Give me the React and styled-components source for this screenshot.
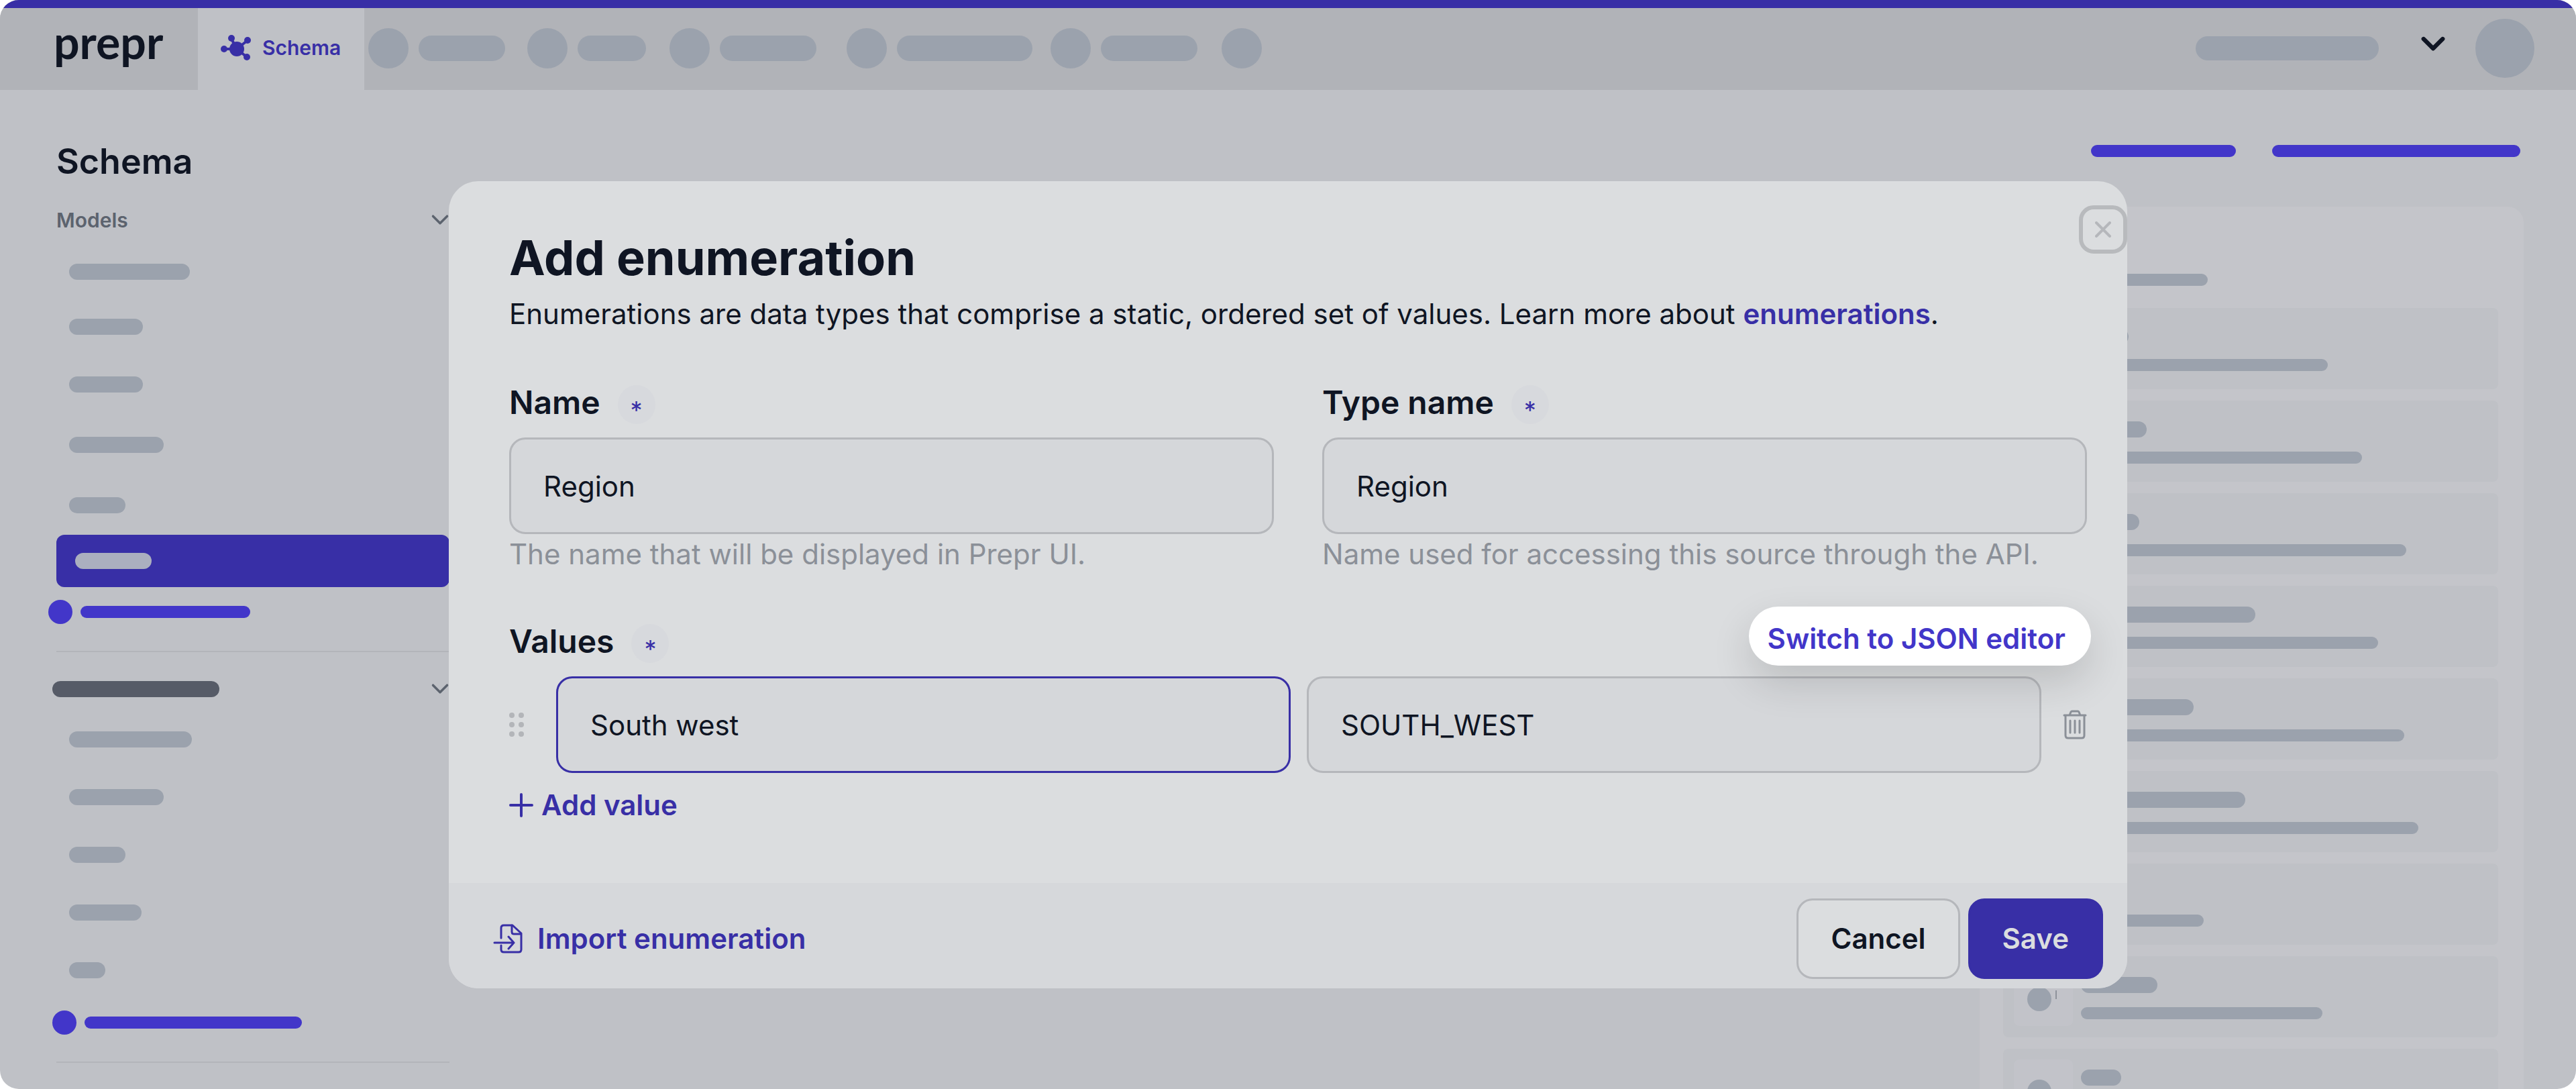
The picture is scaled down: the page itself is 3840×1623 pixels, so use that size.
import React from 'react';
import styled, { createGlobalStyle } from 'styled-components';

const colors = {
  page: '#bfc1c6',
  header: '#b1b3b8',
  panel: '#c4c5ca',
  skeleton: '#9ba2ad',
  brand: '#382fa6',
  accent: '#4236c9',
  modal: '#dbdddf',
  field: '#d5d7da',
  border: '#b5b7bb',
  text: '#0f1523',
  muted: '#8b9098',
  label: '#5c636e',
};

const NAV_ITEMS = [
  { width: 129, gap: 33 },
  { width: 102, gap: 35 },
  { width: 144, gap: 45 },
  { width: 202, gap: 27 },
  { width: 144, gap: 36 },
];

const MODELS = [
  { width: 180, gap: 45 },
  { width: 110, gap: 58 },
  { width: 110, gap: 62 },
  { width: 141, gap: 66 },
  { width: 84, gap: 66 },
];

const COMPONENTS = [
  { width: 183, gap: 51 },
  { width: 141, gap: 62 },
  { width: 84, gap: 62 },
  { width: 108, gap: 62 },
  { width: 54, gap: 62 },
];

const FIELDS = [
  { title: 71, body: 368 },
  { title: 98, body: 419 },
  { title: 87, body: 485 },
  { title: 260, body: 443 },
  { title: 168, body: 482 },
  { title: 245, body: 503 },
  { title: 60, body: 183 },
  { title: 114, body: 360, marked: true },
  { title: 60, body: 240 },
];

const SchemaIcon = () => (
  <svg width="46" height="38" viewBox="0 0 46 38" aria-hidden="true">
    <g stroke="currentColor" strokeWidth="4">
      <path d="M24 21 16 6M24 21 39 9M24 21H6M24 21 39 33" />
    </g>
    <g fill="currentColor">
      <circle cx="24" cy="21" r="11" />
      <circle cx="16" cy="5" r="5" />
      <circle cx="40" cy="8" r="5" />
      <circle cx="5" cy="21" r="5" />
      <circle cx="39" cy="33" r="5" />
    </g>
  </svg>
);

const ChevronIcon = ({ size = 24, stroke = 3 }) => (
  <svg width={size} height={size} viewBox="0 0 24 24" aria-hidden="true">
    <path
      d="M3 7l9 9 9-9"
      fill="none"
      stroke="currentColor"
      strokeWidth={stroke}
      strokeLinecap="round"
      strokeLinejoin="round"
    />
  </svg>
);

const CloseIcon = () => (
  <svg width="24" height="24" viewBox="0 0 24 24" aria-hidden="true">
    <path
      d="M2 2l20 20M22 2 2 22"
      stroke="currentColor"
      strokeWidth="4"
      strokeLinecap="round"
    />
  </svg>
);

const PlusIcon = () => (
  <svg width="36" height="36" viewBox="0 0 36 36" aria-hidden="true">
    <path
      d="M18 2v32M2 18h32"
      stroke="currentColor"
      strokeWidth="4"
      strokeLinecap="round"
    />
  </svg>
);

const GripIcon = () => (
  <svg width="22" height="36" viewBox="0 0 22 36" aria-hidden="true">
    <g fill="currentColor">
      <circle cx="4" cy="4" r="4" />
      <circle cx="18" cy="4" r="4" />
      <circle cx="4" cy="18" r="4" />
      <circle cx="18" cy="18" r="4" />
      <circle cx="4" cy="32" r="4" />
      <circle cx="18" cy="32" r="4" />
    </g>
  </svg>
);

const TrashIcon = () => (
  <svg width="36" height="44" viewBox="0 0 36 44" aria-hidden="true">
    <g
      fill="none"
      stroke="currentColor"
      strokeWidth="3"
      strokeLinecap="round"
      strokeLinejoin="round"
    >
      <path d="M2 8h32M10 8l2-5q1-1 2-1h8q1 0 2 1l2 5M4 8v30q0 4 4 4h20q4 0 4-4V8" />
      <path d="M11 16v18M18 16v18M25 16v18" />
    </g>
  </svg>
);

const ImportIcon = () => (
  <svg width="44" height="44" viewBox="0 0 44 44" aria-hidden="true">
    <g
      fill="none"
      stroke="currentColor"
      strokeWidth="3"
      strokeLinecap="round"
      strokeLinejoin="round"
    >
      <path d="M12 21V6q0-4 4-4h13L42 14v24q0 4-4 4H16q-4 0-4-4v-6" />
      <path d="M28 2v10q0 3 3 3h10M2 28h29M23 19l8 9-8 9" />
    </g>
  </svg>
);

const FieldIcon = ({ marked }) => (
  <svg width="44" height="36" viewBox="0 0 44 36" aria-hidden="true">
    <circle cx="18" cy="18" r="18" fill={colors.skeleton} />
    {marked && <path d="M43 5v13" stroke={colors.label} />}
  </svg>
);

const Header = () => (
  <TopBar>
    <Brand href="#">prepr</Brand>
    <Tab href="#schema">
      <SchemaIcon />
      Schema
    </Tab>
    <Nav>
      {NAV_ITEMS.map((item, i) => (
        <NavItem key={i} $gap={item.gap}>
          <Dot $size={60} />
          <Bar $width={item.width} $height={38} />
        </NavItem>
      ))}
      <Dot $size={60} />
    </Nav>
    <Account>
      <Bar $width={273} $height={36} />
      <AccountToggle type="button" aria-label="Account menu">
        <ChevronIcon size={38} stroke={4} />
      </AccountToggle>
      <Dot $size={88} />
    </Account>
  </TopBar>
);

const SideNav = () => (
  <Sidebar>
    <SidebarTitle>Schema</SidebarTitle>
    <SidebarHeading>
      Models
      <ChevronIcon size={28} />
    </SidebarHeading>
    {MODELS.map((item, i) => (
      <SidebarItem key={i} $gap={item.gap}>
        <Bar $width={item.width} $height={24} />
      </SidebarItem>
    ))}
    <ActiveItem>
      <Bar $width={114} $height={24} $color="#abafbf" />
    </ActiveItem>
    <SidebarAction $gap={19} $outset={12}>
      <Dot $size={36} $color={colors.accent} />
      <Bar $width={253} $height={18} $color={colors.accent} />
    </SidebarAction>
    <Divider />
    <SidebarHeading $outset={6}>
      <Bar $width={249} $height={24} $color="#565b67" />
      <ChevronIcon size={28} />
    </SidebarHeading>
    {COMPONENTS.map((item, i) => (
      <SidebarItem key={i} $gap={i === 0 ? 43 : item.gap}>
        <Bar $width={item.width} $height={24} />
      </SidebarItem>
    ))}
    <SidebarAction $gap={48} $outset={6}>
      <Dot $size={36} $color={colors.accent} />
      <Bar $width={324} $height={18} $color={colors.accent} />
    </SidebarAction>
    <Divider />
  </Sidebar>
);

const FieldPanel = () => (
  <Main>
    <PageActions>
      <Bar $width={216} $height={18} $color={colors.accent} />
      <Bar $width={370} $height={18} $color={colors.accent} />
    </PageActions>
    <Panel>
      <Bar $width={305} $height={18} />
      <PanelList>
        {FIELDS.map((field, i) => (
          <PanelRow key={i}>
            <Thumb>
              <FieldIcon marked={field.marked} />
            </Thumb>
            <PanelRowText>
              <Bar $width={field.title} $height={24} />
              <Bar $width={field.body} $height={18} />
            </PanelRowText>
          </PanelRow>
        ))}
      </PanelList>
    </Panel>
  </Main>
);

const EnumerationModal = () => (
  <Overlay>
    <Modal role="dialog" aria-modal="true" aria-labelledby="modal-title">
      <CloseButton type="button" aria-label="Close">
        <CloseIcon />
      </CloseButton>
      <ModalBody>
        <ModalTitle id="modal-title">Add enumeration</ModalTitle>
        <Description>
          Enumerations are data types that comprise a static, ordered set of
          values. Learn more about <a href="#enumerations">enumerations</a>.
        </Description>

        <FieldGrid>
          <div>
            <LabelRow>
              <Label htmlFor="name">Name</Label>
              <Required>*</Required>
            </LabelRow>
            <Input id="name" type="text" defaultValue="Region" />
            <Help>The name that will be displayed in Prepr UI.</Help>
          </div>
          <div>
            <LabelRow>
              <Label htmlFor="type-name">Type name</Label>
              <Required>*</Required>
            </LabelRow>
            <Input id="type-name" type="text" defaultValue="Region" />
            <Help>Name used for accessing this source through the API.</Help>
          </div>
        </FieldGrid>

        <ValuesHeader>
          <LabelRow>
            <Label htmlFor="value-label">Values</Label>
            <Required>*</Required>
          </LabelRow>
          <SwitchButton type="button">Switch to JSON editor</SwitchButton>
        </ValuesHeader>
        <ValueRow>
          <IconButton type="button" aria-label="Reorder" $color="#b3b5b9">
            <GripIcon />
          </IconButton>
          <ValueInputs>
            <Input
              id="value-label"
              type="text"
              defaultValue="South west"
              $active
            />
            <Input
              type="text"
              aria-label="Value API ID"
              defaultValue="SOUTH_WEST"
            />
          </ValueInputs>
          <IconButton type="button" aria-label="Delete value">
            <TrashIcon />
          </IconButton>
        </ValueRow>
        <AddButton type="button">
          <PlusIcon />
          Add value
        </AddButton>
      </ModalBody>

      <ModalFooter>
        <ImportButton type="button">
          <ImportIcon />
          Import enumeration
        </ImportButton>
        <FooterActions>
          <Button type="button">Cancel</Button>
          <Button type="button" $primary>
            Save
          </Button>
        </FooterActions>
      </ModalFooter>
    </Modal>
  </Overlay>
);

const App = () => (
  <>
    <GlobalStyle />
    <Page>
      <Header />
      <Workspace>
        <SideNav />
        <FieldPanel />
      </Workspace>
      <EnumerationModal />
    </Page>
  </>
);

const GlobalStyle = createGlobalStyle`
  *, *::before, *::after {
    box-sizing: border-box;
  }

  body {
    margin: 0;
    background: #fff;
    color: ${colors.text};
    font-family: Inter, sans-serif;
    font-size: 42px;
    line-height: 56px;
  }

  button, input {
    font: inherit;
    color: inherit;
  }

  button {
    padding: 0;
    border: 0;
    background: none;
    cursor: pointer;
  }

  h1, h2, p {
    margin: 0;
  }

  a {
    color: inherit;
    text-decoration: none;
  }

  svg {
    display: block;
    flex: none;
  }
`;

const Page = styled.div`
  position: relative;
  display: flex;
  flex-direction: column;
  height: 100vh;
  overflow: hidden;
  border-radius: 28px;
  background: ${colors.page};
`;

const Bar = styled.div`
  flex: none;
  width: ${props => props.$width}px;
  height: ${props => props.$height}px;
  border-radius: 20px;
  background: ${props => props.$color || colors.skeleton};
`;

const Dot = styled.div`
  flex: none;
  width: ${props => props.$size}px;
  height: ${props => props.$size}px;
  border-radius: 50%;
  background: ${props => props.$color || colors.skeleton};
`;

const TopBar = styled.header`
  display: flex;
  flex: none;
  height: 134px;
  border-top: 12px solid ${colors.brand};
  background: ${colors.header};
`;

const Brand = styled.a`
  width: 295px;
  padding: 14px 0 0 80px;
  font-family: Lato, sans-serif;
  font-size: 68px;
  font-weight: 700;
  line-height: 72px;
`;

const Tab = styled.a`
  display: flex;
  align-items: center;
  gap: 16px;
  width: 248px;
  padding: 0 0 4px 34px;
  background: ${colors.page};
  color: ${colors.brand};
  font-size: 30px;
  font-weight: 600;
`;

const Nav = styled.nav`
  display: flex;
  align-items: center;
  padding: 0 0 2px 6px;
`;

const NavItem = styled.div`
  display: flex;
  align-items: center;
  gap: 15px;
  margin-right: ${props => props.$gap}px;
`;

const Account = styled.div`
  display: flex;
  align-items: center;
  margin-left: auto;
  padding: 0 62px 2px 0;
`;

const AccountToggle = styled.button`
  margin: 0 44px 12px 62px;
`;

const Workspace = styled.div`
  display: flex;
  flex: 1;
  min-height: 0;
`;

const Sidebar = styled.aside`
  display: flex;
  flex: none;
  flex-direction: column;
  width: 670px;
  padding: 75px 0 0 84px;
`;

const SidebarTitle = styled.h1`
  font-size: 52px;
  font-weight: 600;
  line-height: 64px;
`;

const SidebarHeading = styled.div`
  display: flex;
  flex: none;
  align-items: center;
  justify-content: space-between;
  height: 40px;
  margin: 35px 0 0 ${props => -(props.$outset || 0)}px;
  color: ${colors.label};
  font-size: 30px;
  font-weight: 600;
`;

const SidebarItem = styled.div`
  flex: none;
  margin-top: ${props => props.$gap}px;
  padding-left: 19px;
`;

const ActiveItem = styled.div`
  display: flex;
  flex: none;
  align-items: center;
  height: 78px;
  margin-top: 32px;
  padding-left: 28px;
  border-radius: 12px;
  background: ${colors.brand};
`;

const SidebarAction = styled.div`
  display: flex;
  flex: none;
  align-items: center;
  gap: 12px;
  margin: ${props => props.$gap}px 0 0 ${props => -props.$outset}px;
`;

const Divider = styled.hr`
  flex: none;
  width: 100%;
  height: 2px;
  margin: 40px 0 0;
  border: 0;
  background: #b3b5ba;
`;

const Main = styled.main`
  display: flex;
  flex: 1;
  flex-direction: column;
  align-items: flex-end;
  padding: 82px 78px 0 0;
`;

const PageActions = styled.div`
  display: flex;
  gap: 54px;
  padding-right: 5px;
`;

const Panel = styled.section`
  flex: none;
  width: 811px;
  margin-top: 74px;
  padding: 100px 38px 40px 35px;
  border-radius: 24px;
  background: ${colors.panel};
`;

const PanelList = styled.div`
  display: grid;
  gap: 17px;
  margin-top: 33px;
`;

const PanelRow = styled.div`
  display: flex;
  align-items: flex-start;
  gap: 12px;
  height: 121px;
  padding: 16px 16px 0;
  border-radius: 8px;
  background: ${colors.page};
`;

const Thumb = styled.div`
  display: flex;
  align-items: center;
  justify-content: flex-end;
  width: 88px;
  height: 88px;
  padding: 8px 24px 0 0;
  border-radius: 8px;
  background: #c2c3c9;
`;

const PanelRowText = styled.div`
  display: grid;
  gap: 21px;
  padding-top: 15px;
`;

const Overlay = styled.div`
  position: absolute;
  inset: 0;
  display: flex;
  align-items: flex-start;
  justify-content: center;
  padding-top: 270px;
`;

const Modal = styled.div`
  position: relative;
  width: 90%;
  max-width: 2502px;
  border-radius: 44px;
  background: ${colors.modal};
`;

const CloseButton = styled.button`
  position: absolute;
  top: 36px;
  right: 0;
  display: flex;
  align-items: center;
  justify-content: center;
  width: 72px;
  height: 72px;
  border: 6px solid #b8babd;
  border-radius: 22px;
  color: ${colors.border};
`;

const ModalBody = styled.div`
  padding: 70px 60px 88px 90px;
`;

const ModalTitle = styled.h2`
  font-size: 72px;
  font-weight: 700;
  line-height: 88px;
`;

const Description = styled.p`
  margin-top: 12px;

  a {
    color: ${colors.brand};
    font-weight: 600;
  }
`;

const FieldGrid = styled.div`
  display: grid;
  grid-template-columns: 1fr 1fr;
  gap: 72px;
  margin-top: 72px;
`;

const LabelRow = styled.div`
  display: flex;
  align-items: flex-end;
  gap: 26px;
`;

const Label = styled.label`
  font-size: 48px;
  font-weight: 600;
  line-height: 64px;
`;

const Required = styled.span`
  width: 56px;
  height: 58px;
  padding-top: 14px;
  border-radius: 50%;
  background: #d7d9dd;
  color: ${colors.brand};
  font-size: 36px;
  line-height: 46px;
  text-align: center;
`;

const Input = styled.input`
  display: block;
  width: 100%;
  min-width: 0;
  height: 144px;
  margin-top: 20px;
  padding: 0 48px;
  border: ${props =>
    props.$active ? `3px solid ${colors.brand}` : `3px solid ${colors.border}`};
  border-radius: 24px;
  outline: none;
  background: ${colors.field};
`;

const Help = styled.p`
  margin-top: 2px;
  color: ${colors.muted};
`;

const ValuesHeader = styled.div`
  display: flex;
  align-items: center;
  justify-content: space-between;
  margin-top: 50px;

  ${LabelRow} {
    padding-top: 16px;
  }
`;

const SwitchButton = styled.button`
  position: relative;
  z-index: 1;
  height: 88px;
  margin-right: -6px;
  padding: 8px 38px 0 28px;
  border-radius: 44px;
  background: #fff;
  box-shadow: 0 24px 60px rgba(0, 0, 0, 0.14);
  color: ${colors.accent};
  font-weight: 600;
`;

const ValueRow = styled.div`
  display: flex;
  align-items: center;
  margin-top: 16px;
`;

const ValueInputs = styled.div`
  display: grid;
  flex: 1;
  grid-template-columns: 1fr 1fr;
  gap: 24px;
  margin: 0 32px 0 48px;

  ${Input} {
    margin-top: 0;
  }
`;

const IconButton = styled.button`
  flex: none;
  color: ${props => props.$color || colors.muted};
`;

const AddButton = styled.button`
  display: flex;
  align-items: center;
  gap: 12px;
  margin-top: 20px;
  color: ${colors.brand};
  font-weight: 600;
`;

const ModalFooter = styled.footer`
  display: flex;
  align-items: center;
  justify-content: space-between;
  padding: 23px 36px 14px 66px;
  border-radius: 0 0 44px 44px;
  background: #d6d8db;
`;

const ImportButton = styled.button`
  display: flex;
  align-items: center;
  gap: 22px;
  color: ${colors.brand};
  font-weight: 600;
`;

const FooterActions = styled.div`
  display: flex;
  gap: 12px;
`;

const Button = styled.button`
  height: 120px;
  padding: 0 48px;
  border: 3px solid ${props => (props.$primary ? colors.brand : colors.border)};
  border-radius: 24px;
  background: ${props => (props.$primary ? colors.brand : colors.modal)};
  color: ${props => (props.$primary ? colors.modal : colors.text)};
  font-weight: 600;
`;

export default App;
